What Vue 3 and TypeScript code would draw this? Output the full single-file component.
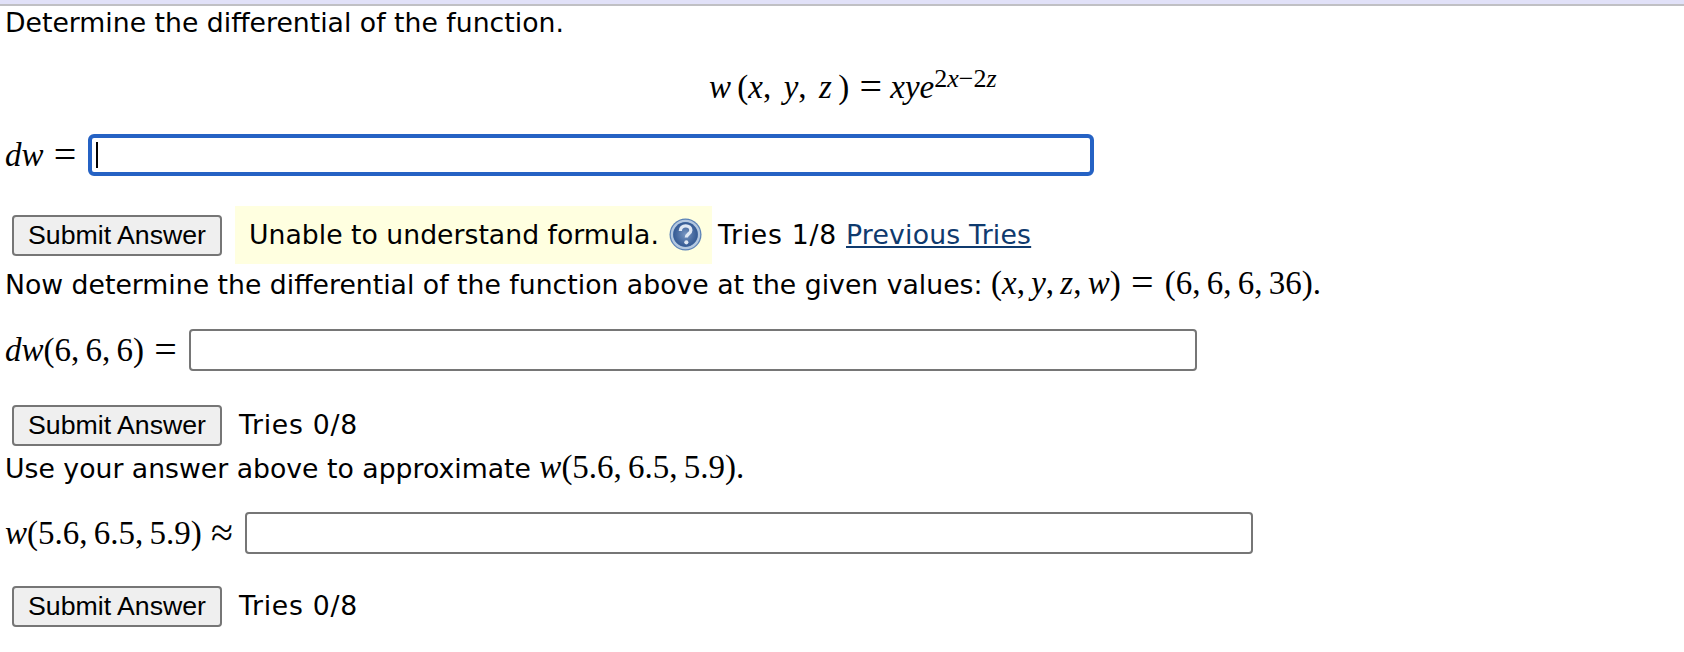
<template>
  <div class="page">
    <div class="top-bar"></div>
    <p class="text first">Determine the differential of the function.</p>
    <div class="display">
      <span class="math"><i>w</i> (<i>x</i>,&nbsp; <i>y</i>,&nbsp; <i>z</i> ) <span class="op">=</span> <i>xye</i><sup><span>2</span><i>x</i>−<span>2</span><i>z</i></sup></span>
    </div>

    <div class="answer-row row-one">
      <span class="math"><i>dw</i> <span class="op">=</span></span>
      <span class="input-wrap">
        <input class="answer focused" type="text" />
        <span class="caret"></span>
      </span>
    </div>

    <div class="submit-row row-feedback">
      <button class="submit" type="button">Submit Answer</button>
      <span class="feedback">
        Unable to understand formula.
        <svg class="help" viewBox="0 0 32 32" width="33" height="33">
          <defs>
            <radialGradient id="helpFill" cx="50%" cy="50%" r="55%">
              <stop offset="0%" stop-color="#7896c2" />
              <stop offset="65%" stop-color="#45699f" />
              <stop offset="100%" stop-color="#2f558f" />
            </radialGradient>
          </defs>
          <circle cx="16" cy="16" r="15.5" fill="#5b82b6" />
          <circle cx="16" cy="16" r="13.2" fill="none" stroke="#b4c8e0" stroke-width="2.2" />
          <circle cx="16" cy="16" r="11.8" fill="url(#helpFill)" />
          <path d="M11 12.6c0-3.2 2.2-5 5.2-5 3 0 5 1.8 5 4.2 0 3.6-4.4 3.6-4.4 7.2" fill="none" stroke="#dfe8f4" stroke-width="3.2" />
          <circle cx="16.8" cy="23.6" r="2" fill="#dfe8f4" />
        </svg>
      </span>
      <span class="tries after-feedback">Tries 1/8 <a href="#" class="prev">Previous Tries</a></span>
    </div>

    <p class="text second">
      Now determine the differential of the function above at the given values:
      <span class="math">(<i>x</i>, <i>y</i>, <i>z</i>, <i>w</i>) <span class="op wide">=</span> (6, 6, 6, 36).</span>
    </p>

    <div class="answer-row row-two">
      <span class="math"><i>dw</i>(6, 6, 6) <span class="op">=</span></span>
      <input class="answer" type="text" />
    </div>

    <div class="submit-row row-submit-two">
      <button class="submit" type="button">Submit Answer</button>
      <span class="tries">Tries 0/8</span>
    </div>

    <p class="text third">
      Use your answer above to approximate
      <span class="math"><i>w</i>(5.6, 6.5, 5.9).</span>
    </p>

    <div class="answer-row row-three">
      <span class="math"><i>w</i>(5.6, 6.5, 5.9) <span class="op approx">≈</span></span>
      <input class="answer" type="text" />
    </div>

    <div class="submit-row row-submit-three">
      <button class="submit" type="button">Submit Answer</button>
      <span class="tries">Tries 0/8</span>
    </div>
  </div>
</template>

<script setup lang="ts">
</script>

<style>
html,
body {
  margin: 0;
  background: #fff;
}
</style>

<style scoped>
.page {
  width: 1684px;
  height: 652px;
  overflow: hidden;
  font-family: "DejaVu Sans", Verdana, sans-serif;
  font-size: 26.7px;
  color: #000;
}

.top-bar {
  height: 4px;
  background: #e1e1f8;
  border-bottom: 2px solid #c0c0c4;
}

.text {
  margin: 0;
  padding-left: 5px;
  line-height: 32px;
}

.first {
  margin-top: 1px;
}

.second {
  margin-top: 3px;
}

.third {
  margin-top: 5px;
}

.math {
  font-family: "Liberation Serif", "Times New Roman", serif;
  font-size: 33px;
  line-height: 1;
  white-space: nowrap;
  word-spacing: -2px;
}

.op {
  font-size: 40px;
  line-height: 0;
  vertical-align: -2px;
  margin: 0 2px 0 4px;
}

.op.wide {
  margin: 0 5px 0 4px;
}

.op.approx {
  margin: 0 2px 0 3px;
}

.display {
  margin-top: 30px;
  height: 40px;
  line-height: 40px;
  padding-left: 709px;
}

.display sup {
  font-size: 26px;
  line-height: 0;
  vertical-align: 11px;
}

.answer-row {
  display: flex;
  align-items: center;
  padding-left: 5px;
  gap: 10px;
}

.row-one {
  margin-top: 25px;
}

.row-two {
  margin-top: 28px;
}

.row-three {
  margin-top: 27px;
}

.input-wrap {
  position: relative;
  display: block;
}

.answer {
  display: block;
  box-sizing: border-box;
  width: 1008px;
  height: 42px;
  border: 2px solid #767676;
  border-radius: 4px;
  background: #fff;
  padding: 0;
  margin: 0;
}

.answer.focused {
  width: 1006px;
  border: 4px solid #2562c4;
  border-radius: 6px;
}

.caret {
  position: absolute;
  left: 8px;
  top: 8px;
  width: 2px;
  height: 26px;
  background: #000;
}

.submit-row {
  display: flex;
  align-items: center;
  padding-left: 12px;
}

.row-feedback {
  margin-top: 30px;
  height: 58px;
}

.row-submit-two {
  margin-top: 34px;
}

.row-submit-three {
  margin-top: 32px;
}

.submit {
  box-sizing: border-box;
  width: 210px;
  height: 41px;
  padding: 0;
  border: 2px solid #767676;
  border-radius: 4px;
  background: #efefef;
  color: #000;
  font-family: "Liberation Sans", Arial, sans-serif;
  font-size: 26.7px;
}

.feedback {
  display: flex;
  align-items: center;
  gap: 10px;
  box-sizing: border-box;
  height: 58px;
  width: 477px;
  margin-left: 13px;
  padding: 0 0 2px 14px;
  background: #ffffe0;
}

.help {
  flex: none;
}

.tries {
  margin-left: 17px;
  padding-bottom: 2px;
  letter-spacing: 0.7px;
}

.tries.after-feedback {
  margin-left: 6px;
}

.prev {
  color: #0f3a6e;
  letter-spacing: 0.2px;
}
</style>
